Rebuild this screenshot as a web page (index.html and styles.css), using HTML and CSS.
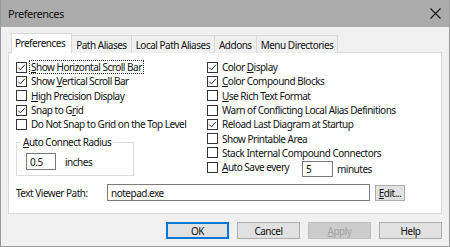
FILE: index.html
```html
<!DOCTYPE html>
<html>
<head>
<meta charset="utf-8">
<link rel="stylesheet" href="styles.css">
</head>
<body>
<div class="window">
  <div class="titlebar">
    <span class="title">Preferences</span>
    <svg class="close" width="11" height="11" viewBox="0 0 11 11"><path d="M0.5 0.5 L10.5 10.5 M10.5 0.5 L0.5 10.5" stroke="#111" stroke-width="1.1" fill="none"/></svg>
  </div>
  <div class="content">
    <div class="tabs">
      <div class="tab active">Preferences</div>
      <div class="tab">Path Aliases</div>
      <div class="tab">Local Path Aliases</div>
      <div class="tab">Addons</div>
      <div class="tab">Menu Directories</div>
    </div>
    <div class="panel">
      <div class="cols">
        <div class="col left">
          <div class="row"><span class="cb"><svg viewBox="0 0 9 9" width="9" height="9"><path d="M1.2 4.6 L3.4 6.8 L7.9 1.8" fill="none" stroke="#222" stroke-width="1"/></svg></span><span class="lbl focus"><u>S</u>how Horizontal Scroll Bar</span></div>
          <div class="row"><span class="cb"><svg viewBox="0 0 9 9" width="9" height="9"><path d="M1.2 4.6 L3.4 6.8 L7.9 1.8" fill="none" stroke="#222" stroke-width="1"/></svg></span><span class="lbl">Show <u>V</u>ertical Scroll Bar</span></div>
          <div class="row"><span class="cb"></span><span class="lbl"><u>H</u>igh Precision Display</span></div>
          <div class="row"><span class="cb"><svg viewBox="0 0 9 9" width="9" height="9"><path d="M1.2 4.6 L3.4 6.8 L7.9 1.8" fill="none" stroke="#222" stroke-width="1"/></svg></span><span class="lbl">Snap to G<u>r</u>id</span></div>
          <div class="row"><span class="cb"></span><span class="lbl">Do Not Snap to Grid on the Top Level</span></div>
          <fieldset class="group">
            <legend><u>A</u>uto Connect Radius</legend>
            <div class="grouprow"><span class="input small">0.5</span><span class="unit">inches</span></div>
          </fieldset>
        </div>
        <div class="col right">
          <div class="row"><span class="cb"><svg viewBox="0 0 9 9" width="9" height="9"><path d="M1.2 4.6 L3.4 6.8 L7.9 1.8" fill="none" stroke="#222" stroke-width="1"/></svg></span><span class="lbl">Color <u>D</u>isplay</span></div>
          <div class="row"><span class="cb"><svg viewBox="0 0 9 9" width="9" height="9"><path d="M1.2 4.6 L3.4 6.8 L7.9 1.8" fill="none" stroke="#222" stroke-width="1"/></svg></span><span class="lbl"><u>C</u>olor Compound Blocks</span></div>
          <div class="row"><span class="cb"></span><span class="lbl"><u>U</u>se Rich Text Format</span></div>
          <div class="row"><span class="cb"></span><span class="lbl">Warn of Conflicting Local Alias Definitions</span></div>
          <div class="row"><span class="cb"><svg viewBox="0 0 9 9" width="9" height="9"><path d="M1.2 4.6 L3.4 6.8 L7.9 1.8" fill="none" stroke="#222" stroke-width="1"/></svg></span><span class="lbl">Reload Last Diagram at Startup</span></div>
          <div class="row"><span class="cb"></span><span class="lbl">Show Printable Area</span></div>
          <div class="row"><span class="cb"></span><span class="lbl">Stack Internal Compound Connectors</span></div>
          <div class="row"><span class="cb"></span><span class="lbl autosave"><u>A</u>uto Save every</span><span class="input tiny">5</span><span class="unit2">minutes</span></div>
        </div>
      </div>
      <div class="pathrow">
        <span class="pathlbl">Text Viewer Path:</span>
        <span class="input path">notepad.exe</span>
        <span class="btn edit"><u>E</u>dit...</span>
      </div>
    </div>
    <div class="buttons">
      <span class="btn main default">OK</span>
      <span class="btn main">Cancel</span>
      <span class="btn main disabled"><u>A</u>pply</span>
      <span class="btn main">Help</span>
    </div>
  </div>
</div>
</body>
</html>
```
FILE: styles.css
```css
* { box-sizing: border-box; }
html, body { margin: 0; padding: 0; background: #f0f0f0; }
body {
  font-family: "Noto Sans", "Open Sans", sans-serif;
  font-size: 10px;
  letter-spacing: -0.5px;
  color: #111;
}
u { text-decoration: underline; text-underline-offset: 1px; }
.window {
  width: 450px;
  height: 247px;
  border: 1px solid #9a9a9a;
  border-top: none;
  background: #f0f0f0;
  overflow: hidden;
}
.titlebar {
  height: 27px;
  background: #ababab;
  display: flex;
  align-items: center;
  justify-content: space-between;
  padding: 0 8px 0 7px;
}
.title { font-size: 11px; color: #111; }
.close { display: block; }
.content { padding: 6px 7px 0 7px; }
.tabs {
  display: flex;
  align-items: flex-end;
  padding-left: 3px;
  height: 20px;
  position: relative;
  z-index: 1;
  margin-bottom: -1px;
}
.tab {
  height: 18px;
  padding: 0 4px;
  border: 1px solid #d9d9d9;
  border-bottom: none;
  margin-left: -1px;
  background: #f0f0f0;
  display: flex;
  align-items: center;
  white-space: nowrap;
}
.tab:first-child { margin-left: 0; }
.tab.active {
  height: 20px;
  background: #fff;
  padding: 0 6px 2px 3px;
}
.panel {
  background: #fff;
  border: 1px solid #d9d9d9;
  height: 162px;
  padding: 7px 0 0 7px;
}
.cols { display: flex; }
.col.left { width: 191px; }
.col.right { flex: 1; }
.row {
  height: 14.3px;
  display: flex;
  align-items: center;
  white-space: nowrap;
}
.cb {
  width: 11px;
  height: 11px;
  border: 1px solid #333;
  background: #fff;
  margin-right: 2px;
  flex: none;
  display: flex;
}
.cb svg { display: block; }
.lbl { padding: 0 1px; border: 1px solid transparent; line-height: 12px; }
.lbl.focus { border: 1px dotted #333; }
.lbl.autosave { width: 82px; }
.group {
  margin: 4px 0 0 0;
  width: 118px;
  height: 41px;
  border: 1px solid #dcdcdc;
  padding: 0 4px;
}
.group legend { padding: 0 2px; }
.grouprow { display: flex; align-items: center; margin: 4px 0 0 5px; }
.input {
  display: flex;
  align-items: center;
  height: 17px;
  border: 1px solid #7a7a7a;
  background: #fff;
  padding-left: 3px;
}
.input.small { width: 30px; }
.unit { margin-left: 9px; }
.input.tiny { width: 31px; height: 16px; margin-top: 4px; }
.unit2 { margin-left: 4px; margin-top: 3px; }
.pathrow {
  display: flex;
  align-items: center;
  margin-top: 8px;
  height: 17px;
}
.pathlbl { width: 91px; }
.input.path { width: 263px; }
.btn {
  display: flex;
  align-items: center;
  justify-content: center;
  background: #e1e1e1;
  border: 1px solid #adadad;
}
.btn.edit { width: 30px; height: 16px; margin-left: 5px; }
.buttons {
  display: flex;
  justify-content: flex-end;
  gap: 8px;
  margin-top: 8px;
}
.btn.main { width: 63px; height: 17px; }
.btn.default { border: 1px solid #0078d7; box-shadow: inset 0 0 0 1px #0078d7; }
.btn.disabled { background: #cccccc; border-color: #bfbfbf; color: #a0a0a0; }
```
